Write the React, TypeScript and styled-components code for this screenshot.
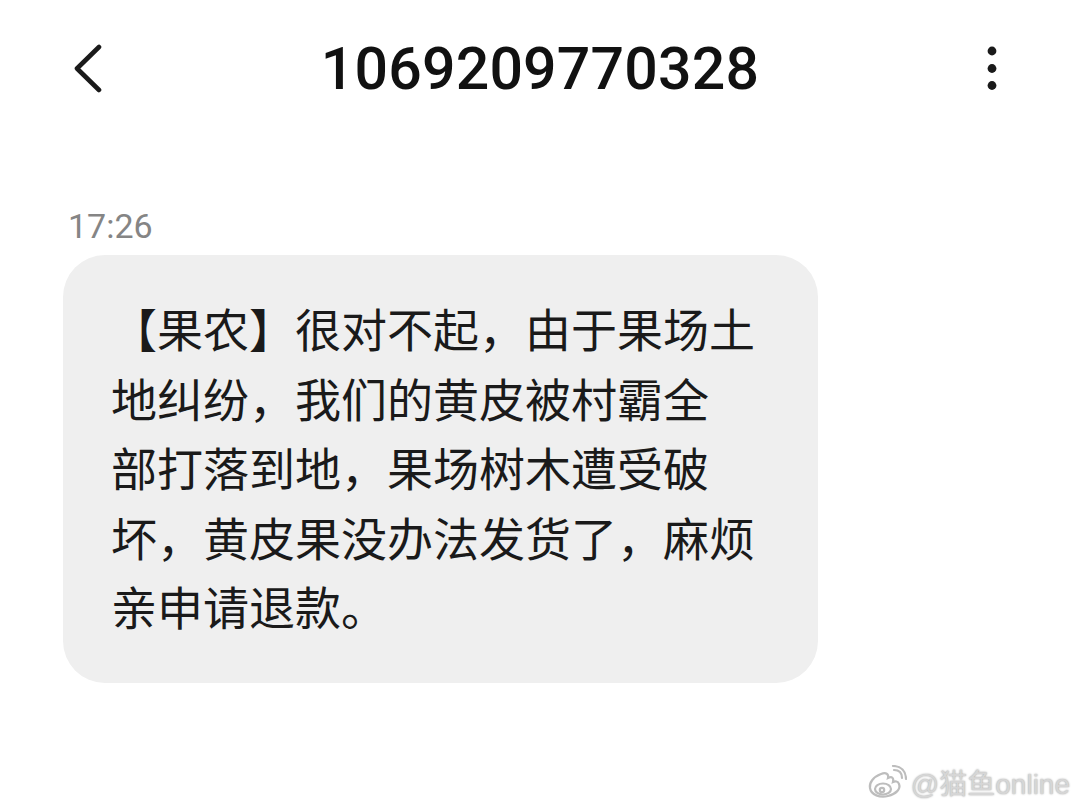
import React from "react";
import styled, { createGlobalStyle } from "styled-components";

const Global = createGlobalStyle`
  html, body { margin: 0; padding: 0; background: #ffffff; }
  body { font-family: "Noto Sans CJK SC", "Noto Sans", sans-serif; }
`;

const Page = styled.div`
  position: relative;
  width: 1080px;
  height: 810px;
  overflow: hidden;
  background: #ffffff;
  display: flex;
  flex-direction: column;
`;

const Header = styled.header`
  margin-top: 29px;
  height: 80px;
  display: grid;
  grid-template-columns: 1fr auto 1fr;
  align-items: center;
`;

const IconButton = styled.div<{ $align: "start" | "end" }>`
  display: flex;
  justify-content: ${(p) => (p.$align === "start" ? "flex-start" : "flex-end")};
  align-items: center;
  padding: ${(p) => (p.$align === "start" ? "0 0 0 72px" : "0 82px 0 0")};
`;

const Title = styled.h1`
  margin: 0;
  font-family: Roboto, "Liberation Sans", sans-serif;
  font-weight: 500;
  font-size: 59px;
  line-height: 80px;
  color: #111111;
  letter-spacing: 0.2px;
`;

const Time = styled.div`
  margin: 97px 0 0 68px;
  font-family: Roboto, "Liberation Sans", sans-serif;
  font-size: 34px;
  line-height: 40px;
  color: #858585;
`;

const Bubble = styled.div`
  margin: 9px 0 0 63px;
  width: 755px;
  box-sizing: border-box;
  padding: 38px 40px 42px 48px;
  background: #efefef;
  border-radius: 42px;
`;

const Line = styled.span`
  display: block;
  font-family: "Noto Sans CJK SC", sans-serif;
  font-size: 46px;
  line-height: 69.5px;
  color: #1a1a1a;
  white-space: nowrap;
`;

const Watermark = styled.div`
  position: absolute;
  right: 10px;
  bottom: 8px;
  display: flex;
  align-items: center;
  gap: 4px;
  font-family: "Liberation Sans", "Noto Sans CJK SC", sans-serif;
  font-size: 28px;
  color: #d6d6d6;
  text-shadow: 0 0 2px #9a9a9a;
`;

const lines = [
  "【果农】很对不起，由于果场土",
  "地纠纷，我们的黄皮被村霸全",
  "部打落到地，果场树木遭受破",
  "坏，黄皮果没办法发货了，麻烦",
  "亲申请退款。",
];

export default function App() {
  return (
    <Page>
      <Global />
      <Header>
        <IconButton $align="start">
          <svg width="34" height="50" viewBox="0 0 34 50">
            <path
              d="M27 3 L5 24.5 L27 46"
              fill="none"
              stroke="#1a1a1a"
              strokeWidth="4.6"
              strokeLinecap="round"
              strokeLinejoin="round"
            />
          </svg>
        </IconButton>
        <Title>1069209770328</Title>
        <IconButton $align="end">
          <svg width="12" height="48" viewBox="0 0 12 48">
            <circle cx="6" cy="6" r="4.4" fill="#1a1a1a" />
            <circle cx="6" cy="23.5" r="4.4" fill="#1a1a1a" />
            <circle cx="6" cy="40.5" r="4.4" fill="#1a1a1a" />
          </svg>
        </IconButton>
      </Header>
      <Time>17:26</Time>
      <Bubble>
        {lines.map((l) => (
          <Line key={l}>{l}</Line>
        ))}
      </Bubble>
      <Watermark>
        <svg width="40" height="34" viewBox="0 0 40 34">
          <g fill="none" stroke="#bdbdbd" strokeWidth="2.2" strokeLinecap="round">
            <path d="M14 9 C6 12 2 18 3 23 C4 30 13 33 21 31 C29 29 34 24 32 19 C31 16 28 16 26 17 C27 13 25 11 21 13 C22 9 19 7 14 9 Z" />
            <ellipse cx="16" cy="24" rx="8" ry="5.5" />
            <circle cx="15" cy="25" r="2.2" />
            <path d="M27 5 C32 5 35 8 35 13" />
            <path d="M26 1 C34 1 39 6 39 14" />
          </g>
        </svg>
        <span>@猫鱼online</span>
      </Watermark>
    </Page>
  );
}
